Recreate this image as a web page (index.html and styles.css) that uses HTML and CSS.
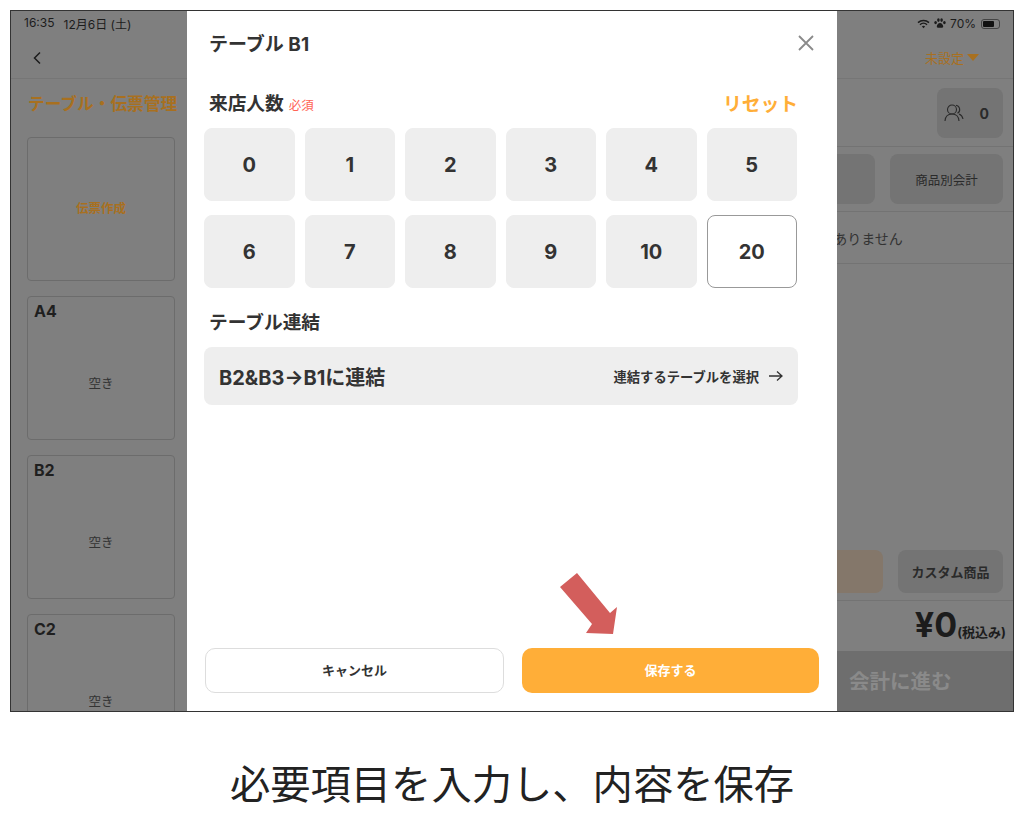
FILE: index.html
```html
<!DOCTYPE html>
<html lang="ja">
<head>
    <meta charset="UTF-8">
    <link rel="stylesheet" href="styles.css">
</head>

<body>
    <div class="device">
        <!-- app behind the dialog -->
        <div class="statusbar">
            <div class="status-left">
                <span>16:35</span>
                <span>12月6日 (土)</span>
            </div>
            <div class="status-right">
                <svg width="13" height="10" viewBox="0 0 13 10">
                    <path d="M1 3.6a8 8 0 0 1 11 0M3 5.7a5.1 5.1 0 0 1 7 0" fill="none" stroke="#1c1c1c" stroke-width="1.5"/>
                    <path d="M4.9 7.4a2.5 2.5 0 0 1 3.2 0L6.5 9.2z" fill="#1c1c1c"/>
                </svg>
                <svg width="12" height="11" viewBox="0 0 12 11" fill="#1c1c1c">
                    <ellipse cx="1.6" cy="4.6" rx="1.3" ry="1.7"/>
                    <ellipse cx="4.4" cy="2.1" rx="1.3" ry="1.8"/>
                    <ellipse cx="7.6" cy="2.1" rx="1.3" ry="1.8"/>
                    <ellipse cx="10.4" cy="4.6" rx="1.3" ry="1.7"/>
                    <path d="M6 5c1.8 0 3.2 2 3.2 3.6 0 1.5-1.7 1.2-3.2 1.2s-3.2.3-3.2-1.2C2.800 7 4.200 5 6 5z"/>
                </svg>
                <span>70%</span>
                <span class="battery"><span class="battery-level"></span></span>
            </div>
        </div>

        <div class="navbar">
            <svg width="10" height="14" viewBox="0 0 10 14">
                <path d="M8 1.500 2.500 7 8 12.500" fill="none" stroke="#1c1c1c" stroke-width="1.500"/>
            </svg>
            <div class="nav-status">未設定 <span class="caret"></span></div>
        </div>

        <div class="main">
            <div class="tables">
                <div class="page-title">テーブル・伝票管理</div>
                <div class="table-card new">伝票作成</div>
                <div class="table-card">
                    <div class="table-name">A4</div>
                    <div class="table-state">空き</div>
                </div>
                <div class="table-card">
                    <div class="table-name">B2</div>
                    <div class="table-state">空き</div>
                </div>
                <div class="table-card">
                    <div class="table-name">C2</div>
                    <div class="table-state">空き</div>
                </div>
            </div>

            <div class="side">
                <div class="side-row guests-row">
                    <div class="guests">
                        <svg width="20" height="20" viewBox="0 0 20 20" fill="none" stroke="#2a2a2a" stroke-width="1.100">
                            <circle cx="8" cy="6.500" r="4.500"/>
                            <path d="M1 18c.3-4.500 3-7 7-7s6.700 2.500 7 7"/>
                            <path d="M12 2.300a4.300 4.300 0 0 1 1.500 8M15 11c2 .8 3.500 2.500 4 5"/>
                        </svg>
                        <span>0</span>
                    </div>
                </div>
                <div class="side-row pay-row">
                    <div class="side-btn"></div>
                    <div class="side-btn">商品別会計</div>
                </div>
                <div class="empty-row">商品がありません</div>
                <div class="side-space"></div>
                <div class="side-row item-row">
                    <div class="item-btn accent"></div>
                    <div class="item-btn">カスタム商品</div>
                </div>
                <div class="total">¥0<small>(税込み)</small></div>
                <div class="pay-bar">会計に進む</div>
            </div>
        </div>

        <!-- dialog -->
        <div class="modal">
            <div class="modal-head">
                <h1>テーブル B1</h1>
                <svg width="18" height="18" viewBox="0 0 18 18">
                    <path d="M2 2l14 14M16 2 2 16" stroke="#8a8a8a" stroke-width="1.800" fill="none"/>
                </svg>
            </div>

            <div class="label-row">
                <div class="label">来店人数<span class="required">必須</span></div>
                <div class="reset">リセット</div>
            </div>

            <div class="counts">
                <button>0</button>
                <button>1</button>
                <button>2</button>
                <button>3</button>
                <button>4</button>
                <button>5</button>
                <button>6</button>
                <button>7</button>
                <button>8</button>
                <button>9</button>
                <button>10</button>
                <button class="selected">20</button>
            </div>

            <div class="label link-label">テーブル連結</div>

            <div class="link-row">
                <div class="link-name">B2&amp;B3→B1に連結</div>
                <div class="link-action">
                    連結するテーブルを選択
                    <svg width="15" height="12" viewBox="0 0 15 12">
                        <path d="M1 6h13M9 1.500 14 6l-5 4.500" fill="none" stroke="#333" stroke-width="1.300"/>
                    </svg>
                </div>
            </div>

            <div class="modal-foot">
                <button class="cancel">キャンセル</button>
                <button class="save">保存する</button>
            </div>
        </div>

        <!-- red arrow pointing at the save button -->
        <svg class="pointer" width="60" height="64" viewBox="0 0 60 64">
            <polygon points="17,1 0,15 32,52 26,61 53,62 57,35 50,41" fill="#d35e5c"/>
        </svg>
    </div>

    <p class="caption">必要項目を入力し、内容を保存</p>
</body>
</html>
```

FILE: styles.css
```css
* {
    box-sizing: border-box;
}

body {
    margin: 0;
    background: #fff;
    color: #2a2a2a;
    font-family: Inter, "Noto Sans CJK JP", sans-serif;
    overflow: hidden;
}

.device {
    position: relative;
    display: flex;
    flex-direction: column;
    height: 702px;
    margin: 10px 10px 0;
    border: 1px solid #333;
    background: #7f7f7f;
    overflow: hidden;
}

/* status bar */
.statusbar {
    display: flex;
    justify-content: space-between;
    align-items: center;
    height: 25px;
    padding: 0 13px;
    font-size: 12px;
    color: #1c1c1c;
}

.status-left {
    display: flex;
    gap: 9px;
}

.status-right {
    display: flex;
    align-items: center;
    gap: 4px;
}

.battery {
    display: block;
    width: 19px;
    height: 10px;
    margin-left: 1px;
    padding: 1px;
    border: 1px solid #444;
    border-radius: 3px;
}

.battery-level {
    display: block;
    width: 70%;
    height: 100%;
    border-radius: 1px;
    background: #111;
}

/* nav */
.navbar {
    display: flex;
    justify-content: space-between;
    align-items: center;
    height: 43px;
    padding: 1px 34px 0 21px;
    border-bottom: 1px solid #767676;
}

.nav-status {
    display: flex;
    align-items: center;
    gap: 3px;
    font-size: 13px;
    color: #a8701f;
}

.caret {
    width: 0;
    height: 0;
    border-top: 7px solid #a8701f;
    border-left: 6px solid transparent;
    border-right: 6px solid transparent;
}

.main {
    display: flex;
    justify-content: space-between;
    flex: 1;
    min-height: 0;
}

/* left column */
.tables {
    width: 176px;
    padding: 0 12px 0 16px;
}

.page-title {
    height: 58px;
    margin-left: 1px;
    padding-top: 12px;
    font-size: 16.700px;
    font-weight: 700;
    line-height: 26px;
    white-space: nowrap;
    color: #a8701f;
}

.table-card {
    height: 144px;
    margin-bottom: 15px;
    padding: 4px 6px;
    border: 1px solid #6c6c6c;
    border-radius: 4px;
    text-align: center;
    font-size: 12.500px;
}

.table-card.new {
    display: flex;
    align-items: center;
    justify-content: center;
    padding-bottom: 8px;
    font-weight: 700;
    color: #a8701f;
}

.table-name {
    font-size: 16px;
    font-weight: 700;
    line-height: 20px;
    text-align: left;
    color: #1f1f1f;
}

.table-state {
    margin-top: 54px;
    line-height: 18px;
    color: #333;
}

/* right column */
.side {
    display: flex;
    flex-direction: column;
    width: 332px;
}

.side-row {
    display: flex;
    justify-content: flex-end;
    gap: 15px;
    padding: 0 10px;
    border-bottom: 1px solid #737373;
}

.guests-row {
    padding-top: 9px;
    padding-bottom: 8px;
}

.guests {
    display: flex;
    align-items: center;
    justify-content: space-between;
    width: 66px;
    height: 50px;
    padding: 0 14px 0 7px;
    border-radius: 8px;
    background: #747474;
    font-size: 14px;
    font-weight: 700;
}

.pay-row {
    padding-top: 7px;
    padding-bottom: 7px;
}

.side-btn {
    display: flex;
    align-items: center;
    justify-content: center;
    width: 113px;
    height: 50px;
    border-radius: 8px;
    background: #747474;
    font-size: 12.500px;
    color: #2a2a2a;
}

.empty-row {
    height: 52px;
    border-bottom: 1px solid #737373;
    text-align: center;
    font-size: 14px;
    line-height: 53px;
    color: #333;
}

.side-space {
    flex: 1;
}

.item-row {
    padding-bottom: 7px;
}

.item-btn {
    display: flex;
    align-items: center;
    justify-content: center;
    width: 105px;
    height: 43px;
    border-radius: 8px;
    background: #747474;
    font-size: 13px;
    font-weight: 700;
    color: #2a2a2a;
}

.item-btn.accent {
    background: #84776a;
}

.total {
    height: 50px;
    padding: 4px 7px 0 0;
    text-align: right;
    font-size: 34px;
    font-weight: 700;
    line-height: 40px;
    color: #1c1c1c;
}

.total small {
    font-size: 13px;
}

.pay-bar {
    height: 60px;
    padding-left: 168px;
    background: #6e6e6e;
    font-size: 20.500px;
    font-weight: 700;
    line-height: 62px;
    color: #8a8a8a;
}

/* dialog */
.modal {
    position: absolute;
    top: 0;
    bottom: 0;
    left: 176px;
    display: flex;
    flex-direction: column;
    width: 650px;
    padding: 0 39px 18px 17px;
    background: #fff;
    color: #333;
}

.modal-head {
    display: flex;
    justify-content: space-between;
    align-items: center;
    height: 62px;
    margin-right: -17px;
    padding-left: 5px;
}

.modal-head h1 {
    margin: 0;
    font-size: 19px;
    font-weight: 700;
}

.modal-head svg {
    margin-top: 2px;
}

.label-row {
    display: flex;
    justify-content: space-between;
    align-items: center;
    height: 24px;
    margin: 19px 0 12px;
}

.label {
    padding: 2px 0 0 5px;
    font-size: 18.700px;
    font-weight: 700;
    line-height: 24px;
}

.required {
    margin-left: 5px;
    font-size: 12.500px;
    font-weight: 400;
    color: #ff6355;
}

.reset {
    padding-bottom: 4px;
    font-size: 18.800px;
    font-weight: 700;
    color: #ffae38;
}

.counts {
    display: grid;
    grid-template-columns: repeat(6, 1fr);
    grid-auto-rows: 73px;
    gap: 14px 10px;
    margin-right: 1px;
}

.counts button {
    padding: 0;
    border: 1px solid #eee;
    border-radius: 8px;
    background: #eee;
    color: #333;
    font: 700 20px Inter, sans-serif;
}

.counts .selected {
    border-color: #999;
    background: #fff;
}

.link-label {
    margin: 23px 0 12px;
    padding-top: 0;
}

.link-row {
    display: flex;
    justify-content: space-between;
    align-items: center;
    height: 58px;
    padding: 0 15px;
    border-radius: 8px;
    background: #eee;
}

.link-name {
    font-size: 20px;
    font-weight: 700;
}

.link-action {
    display: flex;
    align-items: center;
    gap: 9px;
    font-size: 13.300px;
    font-weight: 700;
}

.modal-foot {
    display: flex;
    gap: 18px;
    margin: auto -21px 0 1px;
}

.modal-foot button {
    flex: 1;
    height: 45px;
    padding: 0 0 2px;
    border-radius: 10px;
    font: 700 13px Inter, "Noto Sans CJK JP", sans-serif;
}

.cancel {
    border: 1px solid #ddd;
    background: #fff;
    color: #333;
}

.save {
    border: none;
    background: #ffae38;
    color: #fff;
}

.pointer {
    position: absolute;
    top: 561px;
    left: 549px;
}

.caption {
    margin: 48px 0 0;
    text-align: center;
    font-size: 40.300px;
    line-height: 50px;
    color: #222;
}
```
